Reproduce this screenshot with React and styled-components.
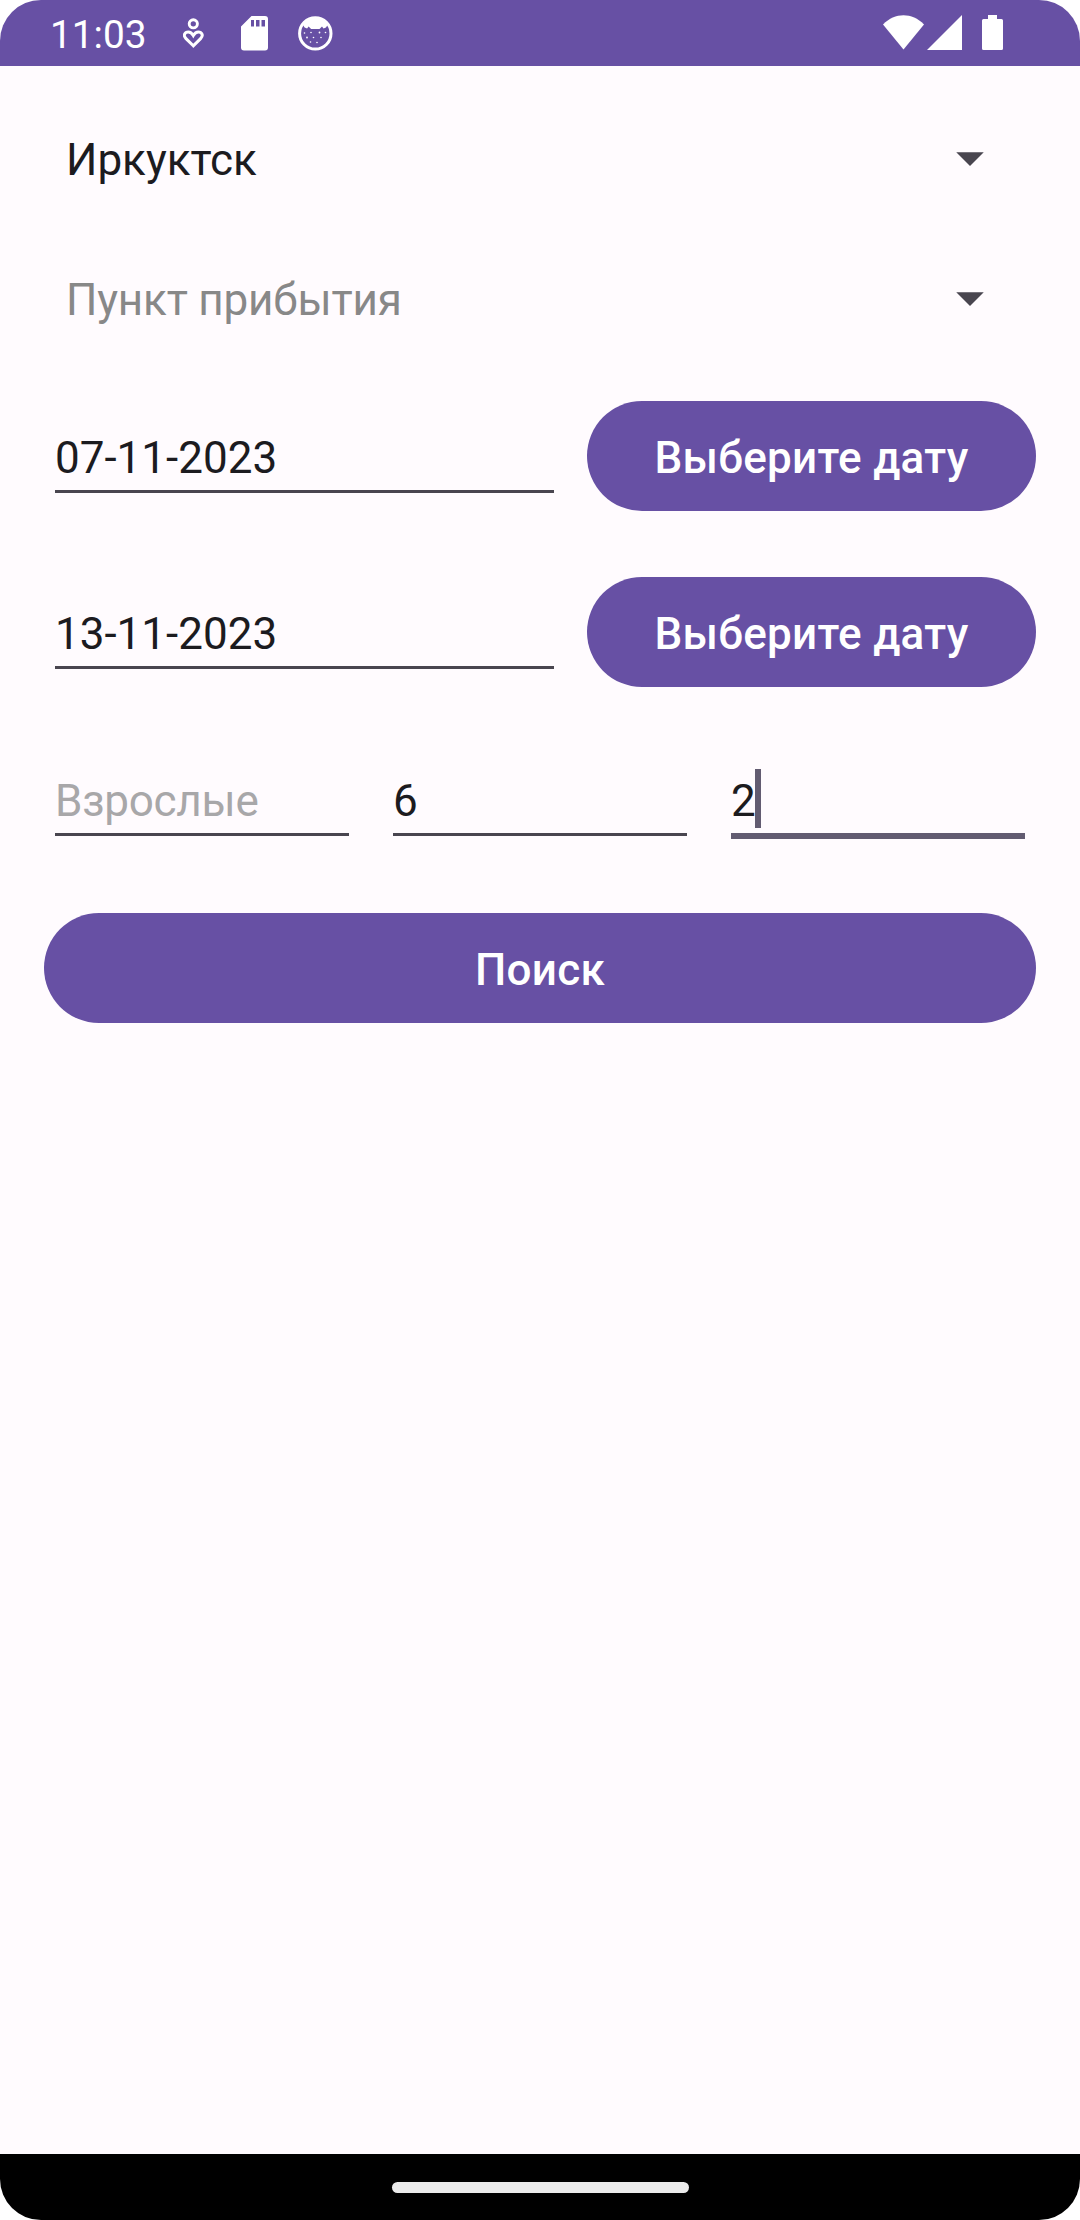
import React from "react";
import styled, { createGlobalStyle, css } from "styled-components";

const GlobalStyle = createGlobalStyle`
  *, *::before, *::after { box-sizing: border-box; }
  body { margin: 0; background: #fff; }
`;

const Screen = styled.div`
  display: flex;
  flex-direction: column;
  width: 1080px;
  height: 2220px;
  overflow: hidden;
  border-radius: 41px;
  background: #fffbfe;
  color: #1c1b1f;
  font-family: Roboto, "Noto Sans", sans-serif;
  font-size: 44px;
  line-height: 52px;
`;

const StatusBar = styled.header`
  display: flex;
  align-items: center;
  justify-content: space-between;
  flex: none;
  height: 66px;
  padding: 0 76px 0 50px;
  background: #6750a4;
  color: #fff;
`;

const StatusGroup = styled.div`
  display: flex;
  align-items: center;
  height: 66px;
`;

const Clock = styled.span`
  width: 133px;
  padding-top: 4px;
  font-size: 38.8px;
  line-height: 46px;
`;

const Glyph = styled.svg`
  display: block;
  flex: none;
  height: 66px;
`;

const Form = styled.main`
  display: flex;
  flex-direction: column;
  flex: 1;
  padding: 44px 44px 0;
`;

const Spinner = styled.div`
  display: flex;
  align-items: center;
  justify-content: space-between;
  height: 96px;
  margin-bottom: 44px;
  padding: 2px 52px 0 22px;
  color: ${(p) => (p.$hint ? "#888888" : "#1c1b1f")};
  letter-spacing: ${(p) => (p.$hint ? "-0.18px" : "0")};
`;

const SpinnerText = styled.span`
  padding-top: 2px;
`;

const DateList = styled.section`
  display: flex;
  flex-direction: column;
  gap: 66px;
  margin: 11px 0 66px;
`;

const Row = styled.div`
  display: flex;
  gap: 22px;
  height: ${(p) => p.$height}px;
`;

const Field = styled.div`
  display: flex;
  flex-direction: column;
  flex: 1;
  padding: ${(p) => p.$top}px 11px 0;
`;

const Value = styled.div`
  display: flex;
  align-items: flex-start;
  height: 59px;
  line-height: 65px;
  color: ${(p) => (p.$hint ? "#a8a7a9" : "#1c1b1f")};
  letter-spacing: ${(p) => (p.$hint ? "-0.25px" : "0")};
`;

const Caret = styled.i`
  width: 6px;
  height: 59px;
  margin-left: -1px;
  background: #625b71;
`;

const Underline = styled.div`
  margin-top: 5px;
  height: 3px;
  background: #49454f;
  ${(p) =>
    p.$focused &&
    css`
      height: 6px;
      background: #625b71;
    `}
`;

const Button = styled.button`
  flex: none;
  width: ${(p) => (p.$wide ? "100%" : "449px")};
  height: 110px;
  margin-top: ${(p) => (p.$wide ? "44px" : "0")};
  padding: 3px 0 0;
  border: 0;
  border-radius: 55px;
  background: #6750a4;
  color: #fff;
  font: 500 44px/52px Roboto, "Noto Sans", sans-serif;
  letter-spacing: 0.28px;
  text-align: center;
`;

const NavBar = styled.footer`
  display: flex;
  align-items: center;
  justify-content: center;
  flex: none;
  height: 66px;
  background: #000;
`;

const HomeHandle = styled.div`
  width: 297px;
  height: 11px;
  border-radius: 5.5px;
  background: #ebebeb;
`;

const Arrow = () => (
  <svg width="28" height="14" viewBox="0 0 28 14" fill="#49454f">
    <path d="M.25.2h27.5L14 14Z" />
  </svg>
);

function Notifications() {
  return (
    <Glyph width="150" viewBox="183 0 150 66" fill="#fff">
      <circle cx="193.3" cy="23.8" r="4.1" fill="none" stroke="#fff" strokeWidth="2.9" />
      <path
        d="M193.3 45.8 186 38.6C182.7 35.2 184.8 32 188.3 32c2.2 0 3.8 1.5 5 3.6 1.2-2.1 2.8-3.6 5-3.6 3.5 0 5.6 3.2 2.3 6.6Z"
        fill="none"
        stroke="#fff"
        strokeWidth="3"
      />
      <path
        fillRule="evenodd"
        d="M251.5 16H265a3 3 0 0 1 3 3v28.5a3 3 0 0 1-3 3h-21a3 3 0 0 1-3-3V26.5ZM251 20v6.5h3V20Zm5 0v6.5h3.5V20Zm5.5 0v6.5h3.5V20Z"
      />
      <circle cx="315.3" cy="33.4" r="15.7" fill="none" stroke="#fff" strokeWidth="3" />
      <path d="M303 25Q307 17.5 315.3 17.5T327.6 25l-1.6 2.5-2.5 1-1.5-2-2.5 2.5h-8.4l-2.5-2.5-1.5 2-2.5-1Z" />
      <g>
        <circle cx="304.5" cy="33" r=".8" />
        <circle cx="311" cy="32.5" r=".8" />
        <circle cx="319.5" cy="32.5" r=".9" />
        <circle cx="325.5" cy="32.5" r=".8" />
        <circle cx="307" cy="37.5" r=".9" />
        <circle cx="313.5" cy="37.5" r=".8" />
        <circle cx="321" cy="37.5" r=".8" />
        <circle cx="310.5" cy="42" r=".8" />
        <circle cx="317" cy="42.5" r=".8" />
      </g>
    </Glyph>
  );
}

function SystemIcons() {
  return (
    <Glyph width="121" viewBox="883 0 121 66" fill="#fff">
      <path d="M883 24.5C895 12.3 912 12.3 924 24.5L903.5 49.5Z" />
      <path d="M962 15v35h-35Z" />
      <path d="M988 15h9v4h4.5a1.5 1.5 0 0 1 1.5 1.5v28a1.5 1.5 0 0 1-1.5 1.5h-18a1.5 1.5 0 0 1-1.5-1.5v-28a1.5 1.5 0 0 1 1.5-1.5h4.5Z" />
    </Glyph>
  );
}

const dates = ["07-11-2023", "13-11-2023"];

export default function App() {
  return (
    <>
      <GlobalStyle />
      <Screen>
        <StatusBar>
          <StatusGroup>
            <Clock>11:03</Clock>
            <Notifications />
          </StatusGroup>
          <SystemIcons />
        </StatusBar>
        <Form>
          <Spinner>
            <SpinnerText>Иркуктск</SpinnerText>
            <Arrow />
          </Spinner>
          <Spinner $hint>
            <SpinnerText>Пункт прибытия</SpinnerText>
            <Arrow />
          </Spinner>
          <DateList>
            {dates.map((date) => (
              <Row key={date} $height={110}>
                <Field $top={25}>
                  <Value>{date}</Value>
                  <Underline />
                </Field>
                <Button>Выберите дату</Button>
              </Row>
            ))}
          </DateList>
          <Row $height={116}>
            <Field $top={16}>
              <Value $hint>Взрослые</Value>
              <Underline />
            </Field>
            <Field $top={16}>
              <Value>6</Value>
              <Underline />
            </Field>
            <Field $top={16}>
              <Value>
                2<Caret />
              </Value>
              <Underline $focused />
            </Field>
          </Row>
          <Button $wide>Поиск</Button>
        </Form>
        <NavBar>
          <HomeHandle />
        </NavBar>
      </Screen>
    </>
  );
}
